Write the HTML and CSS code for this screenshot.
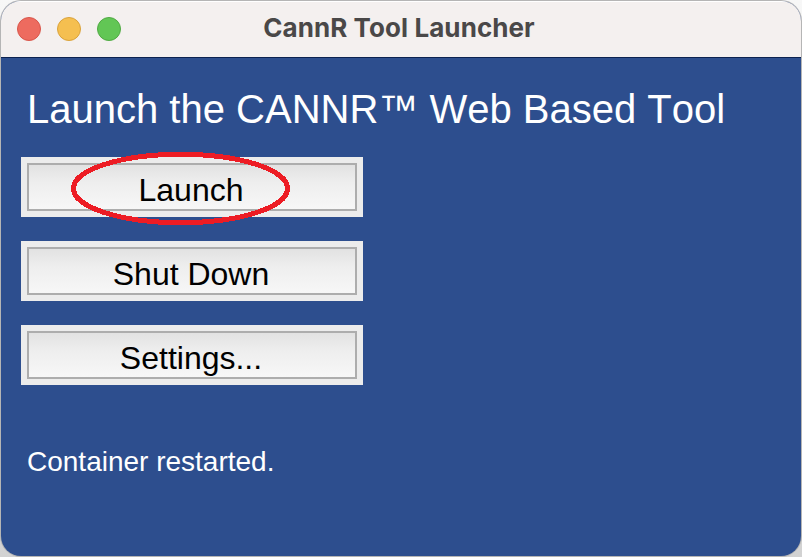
FILE: index.html
```html
<!DOCTYPE html>
<html lang="en">
<head>
<meta charset="utf-8">
<title>CannR Tool Launcher</title>
<link rel="stylesheet" href="styles.css">
</head>
<body>
<main class="window">
  <header class="titlebar">
    <div class="controls">
      <span class="dot dot-close"></span>
      <span class="dot dot-minimize"></span>
      <span class="dot dot-zoom"></span>
    </div>
    <div class="title">CannR Tool Launcher</div>
  </header>
  <section class="content">
    <h1 class="heading">Launch the CANNR™ Web Based Tool</h1>
    <div class="actions">
      <button class="action"><span class="face">Launch</span>
        <svg class="marker" width="222" height="76" viewBox="0 0 222 76" shape-rendering="crispEdges"><ellipse cx="110.5" cy="38.5" rx="107" ry="34.2"/></svg>
      </button>
      <button class="action"><span class="face">Shut Down</span></button>
      <button class="action"><span class="face">Settings...</span></button>
    </div>
    <p class="status">Container restarted.</p>
  </section>
</main>
</body>
</html>
```
FILE: styles.css
```css
* { box-sizing: border-box; }
body {
  margin: 0;
  height: 557px;
  padding: 1px;
  overflow: hidden;
  background: linear-gradient(#f7f7f7, #d2d2d2);
}
.window {
  display: flex;
  flex-direction: column;
  height: 555px;
  border-radius: 20px;
  overflow: hidden;
  background: #2d4e8e;
  box-shadow: 0 0 0 1px #b5b5b5;
  font-family: "Liberation Sans", Arial, sans-serif;
}
.titlebar {
  display: grid;
  grid-template-columns: 120px 1fr 124px;
  align-items: center;
  height: 57px;
  background: #f4f0ef;
  border-bottom: 1px solid #0c2250;
  box-shadow: inset 0 1px #fff;
}
.controls { display: flex; gap: 16px; padding-left: 16px; }
.dot { width: 24px; height: 24px; border-radius: 50%; border: 1px solid; }
.dot-close { background: #ed6b5f; border-color: #d8564b; }
.dot-minimize { background: #f5bf50; border-color: #d9a23c; }
.dot-zoom { background: #62c655; border-color: #50a943; }
.title {
  padding-bottom: 2px;
  text-align: center;
  font: bold 26px/30px Inter, sans-serif;
  letter-spacing: 0.08px;
  color: #4a4848;
}
.content { padding: 28px 20px; }
.heading {
  margin: 0 0 24px 6px;
  font-size: 40px;
  font-weight: 400;
  line-height: 47px;
  font-kerning: none;
  white-space: nowrap;
  color: #fff;
}
.actions { display: flex; flex-direction: column; gap: 24px; width: 342px; }
.action {
  position: relative;
  height: 60px;
  padding: 6px;
  border: 0;
  background: #ececec;
  font: 32px/48px "Liberation Sans", Arial, sans-serif;
  color: #000;
}
.face {
  display: block;
  height: 48px;
  padding: 1px 2px 0 0;
  border: 2px solid #adadad;
  background: linear-gradient(#e2e2e2, #eeeeee 40%, #f7f7f7);
}
.marker {
  position: absolute;
  left: 49px;
  top: -7px;
  fill: none;
  stroke: #ed1c24;
  stroke-width: 5;
}
.status {
  margin: 61px 0 0 6px;
  font-size: 28px;
  line-height: 32px;
  color: #fff;
}
```
